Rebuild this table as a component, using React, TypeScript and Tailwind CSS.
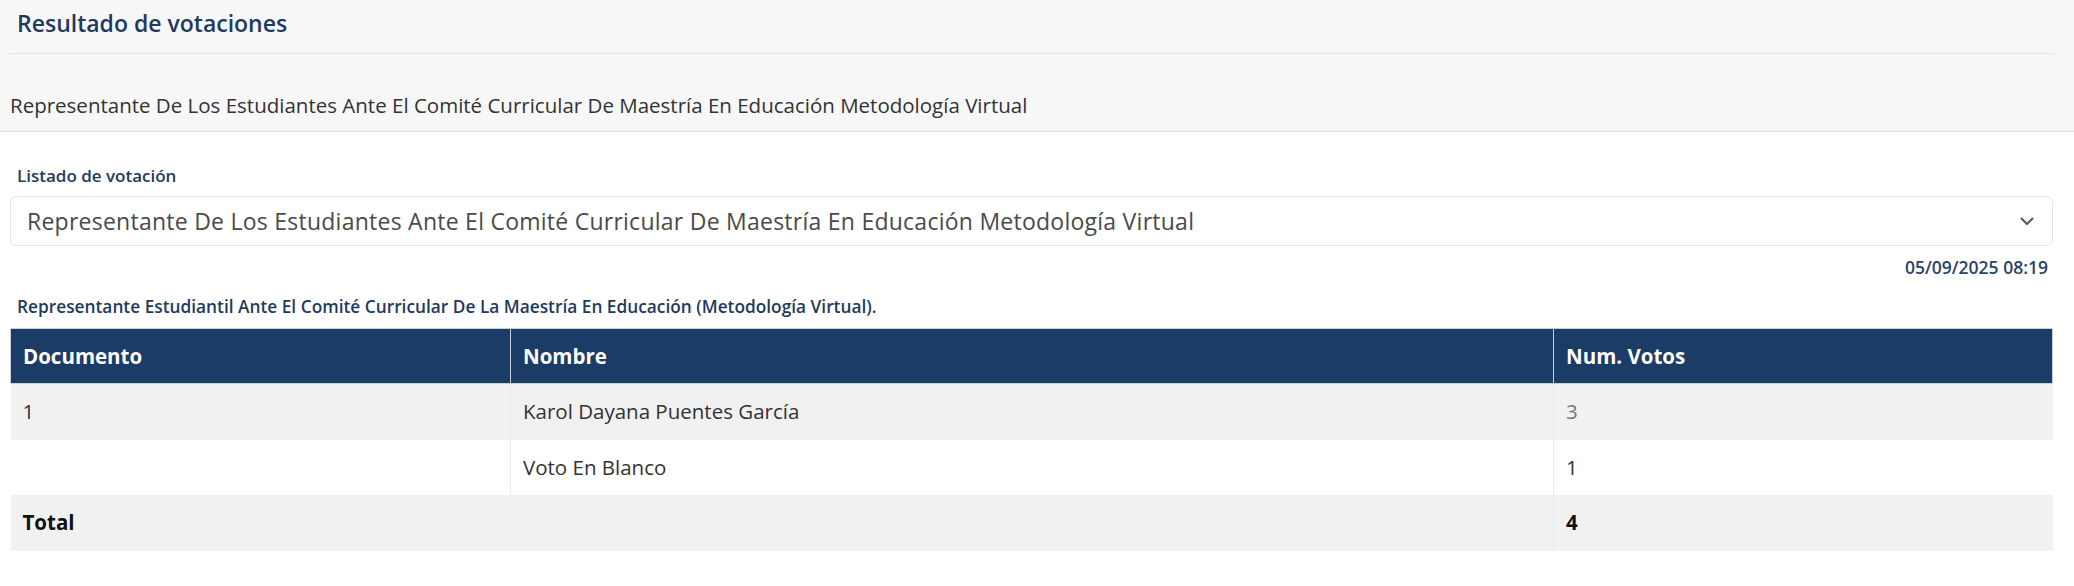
import React from "react";

const LONG =
  "Representante De Los Estudiantes Ante El Comité Curricular De Maestría En Educación Metodología Virtual";

export default function App() {
  return (
    <div className="w-[2074px] min-h-[586px] bg-white font-['Open_Sans',sans-serif]">
      <div className="bg-[#f7f7f7] border-b border-[#dcdcdc] pb-[13px]">
        <div className="pl-[17px] pt-[8px] text-[23px] leading-[30px] font-semibold text-[#1f3a60]">
          Resultado de votaciones
        </div>
        <div className="ml-[9px] mr-[20px] mt-[15px] h-px bg-[#e2e5ea]" />
        <div className="pl-[10px] mt-[38px] text-[20.5px] leading-[26px] text-[#333]">{LONG}</div>
      </div>

      <div className="pl-[10px] pr-[21px]">
        <div className="pl-[7px] pt-[33px] text-[17px] leading-[22px] font-semibold text-[#1f3a60]">
          Listado de votación
        </div>
        <div className="mt-[9px] h-[50px] rounded-[6px] border border-[#e4e4e4] bg-white flex items-center justify-between pl-[16px] pr-[18px]">
          <span className="text-[23px] tracking-[0.25px] text-[#4a4a4a]">{LONG}</span>
          <svg width="14" height="9" viewBox="0 0 14 9" fill="none" className="shrink-0">
            <path d="M1.5 1.5 L7 7 L12.5 1.5" stroke="#555" strokeWidth="2" strokeLinecap="round" strokeLinejoin="round" />
          </svg>
        </div>
        <div className="mt-[10px] pr-[5px] text-right text-[17.5px] leading-[22px] font-semibold text-[#2a4468]">
          05/09/2025 08:19
        </div>
        <div className="pl-[7px] mt-[18px] text-[17.3px] leading-[22px] font-semibold text-[#1f3a60]">
          Representante Estudiantil Ante El Comité Curricular De La Maestría En Educación (Metodología Virtual).
        </div>
        <table className="mt-[10px] w-full border-collapse table-fixed text-[20.5px]">
          <colgroup>
            <col className="w-[500px]" />
            <col className="w-[1043px]" />
            <col />
          </colgroup>
          <thead>
            <tr className="h-[55px] bg-[#1b3c66] text-white">
              <th className="border border-[#c9d0da] pl-[12px] text-left font-bold">Documento</th>
              <th className="border border-[#c9d0da] pl-[12px] text-left font-bold">Nombre</th>
              <th className="border border-[#c9d0da] pl-[12px] text-left font-bold">Num. Votos</th>
            </tr>
          </thead>
          <tbody>
            <tr className="h-[56px] bg-[#f1f1f1] text-[#333]">
              <td className="pl-[12px]">1</td>
              <td className="pl-[12px] border-l border-[#e9e9e9]">Karol Dayana Puentes García</td>
              <td className="pl-[12px] border-l border-[#e9e9e9] text-[#777]">3</td>
            </tr>
            <tr className="h-[55px] bg-white text-[#333]">
              <td className="pl-[12px]"></td>
              <td className="pl-[12px] border-l border-[#ececec]">Voto En Blanco</td>
              <td className="pl-[12px] border-l border-[#ececec]">1</td>
            </tr>
            <tr className="h-[56px] bg-[#f1f1f1] text-[#111] font-bold">
              <td className="pl-[12px]">Total</td>
              <td className="pl-[12px]"></td>
              <td className="pl-[12px] border-l border-[#e9e9e9]">4</td>
            </tr>
          </tbody>
        </table>
      </div>
    </div>
  );
}
